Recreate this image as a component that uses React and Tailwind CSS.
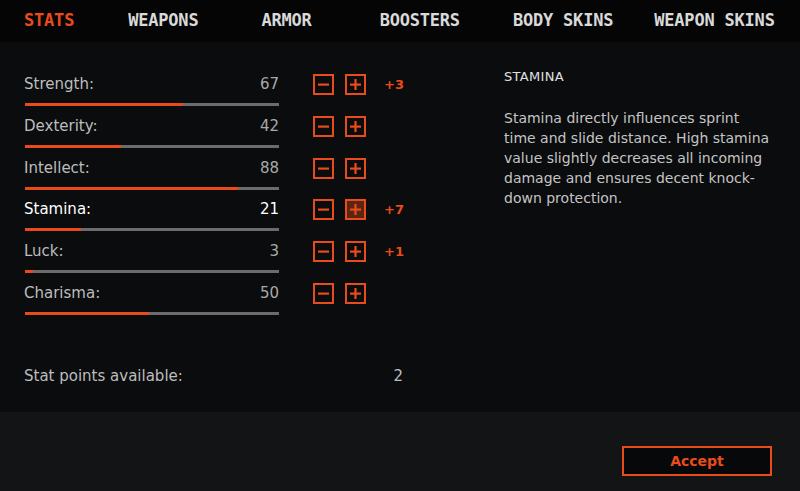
import React from "react";

const tabs = [
  { label: "STATS", gap: "ml-0" },
  { label: "WEAPONS", gap: "ml-[54px]" },
  { label: "ARMOR", gap: "ml-[63px]" },
  { label: "BOOSTERS", gap: "ml-[68px]" },
  { label: "BODY SKINS", gap: "ml-[53px]" },
  { label: "WEAPON SKINS", gap: "ml-[41px]" },
];

const stats = [
  { name: "Strength", value: 67, fill: 158, bonus: "+3" },
  { name: "Dexterity", value: 42, fill: 96 },
  { name: "Intellect", value: 88, fill: 213 },
  { name: "Stamina", value: 21, fill: 56, bonus: "+7", active: true },
  { name: "Luck", value: 3, fill: 8, bonus: "+1" },
  { name: "Charisma", value: 50, fill: 124 },
];

const body = { fontFamily: '"DejaVu Sans", "Liberation Sans", sans-serif' };
const head = { fontFamily: '"DejaVu Sans Mono", "Liberation Mono", monospace' };

function StepButton({ kind, hot }) {
  return (
    <button
      className={`w-[21px] h-[21px] border-2 border-[#e94b1b] flex items-center justify-center ${
        hot ? "bg-[#5c2412]" : "bg-transparent"
      }`}
    >
      <svg width="11" height="11" viewBox="0 0 11 11">
        <rect x="0" y="4.5" width="11" height="2.2" fill="#e94b1b" />
        {kind === "plus" && <rect x="4.4" y="0" width="2.2" height="11" fill="#e94b1b" />}
      </svg>
    </button>
  );
}

function StatRow({ s }) {
  return (
    <div className="h-[41.8px] flex items-start">
      <div className="w-[255px]">
        <div
          className={`flex justify-between h-[21px] leading-[21px] text-[15px] ${
            s.active ? "text-white" : "text-[#bdbdbd]"
          }`}
        >
          <span>{s.name}:</span>
          <span className={s.active ? "text-white" : "text-[#a9a9a9]"}>{s.value}</span>
        </div>
        <div className="mt-[8px] ml-px h-[3px] bg-[#6c6c6c] flex">
          <div className="h-full bg-[#e94b1b]" style={{ width: s.fill }} />
        </div>
      </div>
      <div className="ml-[34px] flex items-center gap-[11px]">
        <StepButton kind="minus" />
        <StepButton kind="plus" hot={s.active} />
      </div>
      {s.bonus && (
        <span className="ml-[18px] h-[21px] leading-[21px] text-[13px] font-semibold text-[#e94b1b]">
          {s.bonus}
        </span>
      )}
    </div>
  );
}

export default function App() {
  return (
    <div className="w-[800px] h-[491px] flex flex-col bg-[#0b0c0e] overflow-hidden" style={body}>
      <header className="h-[42px] shrink-0 px-6 flex items-center bg-[#050505]" style={head}>
        {tabs.map((t, i) => (
          <span
            key={t.label}
            className={`${t.gap} text-[17px] font-bold tracking-[-0.2px] ${
              i === 0 ? "text-[#e94b1b]" : "text-[#d9d9d9]"
            }`}
          >
            {t.label}
          </span>
        ))}
      </header>

      <main className="h-[370px] shrink-0 flex bg-[#0b0c0e]">
        <section className="w-[480px] shrink-0 pl-6 pt-8">
          {stats.map((s) => (
            <StatRow key={s.name} s={s} />
          ))}
          <div className="mt-[41px] w-[379px] flex justify-between h-[21px] leading-[21px] text-[15px] text-[#bdbdbd]">
            <span>Stat points available:</span>
            <span>2</span>
          </div>
        </section>
        <section className="pl-6 pt-[27px] pr-6">
          <h2 className="text-[13px] leading-[16px] text-[#e0e0e0] tracking-[0.3px]">STAMINA</h2>
          <p className="mt-[23px] w-[270px] text-[14px] leading-[20px] text-[#c4c4c4]">
            Stamina directly influences sprint time and slide distance. High stamina value slightly
            decreases all incoming damage and ensures decent knock-down protection.
          </p>
        </section>
      </main>

      <footer className="flex-1 flex justify-end items-start pt-[34px] pr-[28px] bg-[#121416]">
        <button className="w-[150px] h-[30px] border-2 border-[#e94b1b] bg-[#07080a] text-[#e94b1b] text-[14px] font-semibold">
          Accept
        </button>
      </footer>
    </div>
  );
}
